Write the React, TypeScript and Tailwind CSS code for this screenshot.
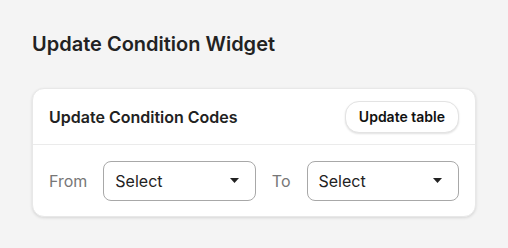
import React from "react";

function Caret() {
  return (
    <svg width="9" height="5" viewBox="0 0 9 5" className="shrink-0">
      <path d="M0 0 L9 0 L4.5 5 Z" fill="#222" />
    </svg>
  );
}

function SelectBox() {
  return (
    <div className="flex-1 h-10 flex items-center justify-between pl-[11px] pr-4 rounded-lg border border-[#a8a8a8] bg-white">
      <span className="text-[16px] text-[#222]">Select</span>
      <Caret />
    </div>
  );
}

export default function App() {
  return (
    <div
      className="w-[508px] h-[248px] bg-[#f4f4f4] px-8 pt-[30px]"
      style={{ fontFamily: "Inter, 'Noto Sans', sans-serif" }}
    >
      <h1 className="text-[20px] leading-[28px] font-semibold text-[#222]">
        Update Condition Widget
      </h1>
      <div className="mt-[30px] bg-white rounded-xl border border-[#e8e8e8] shadow-[0_1px_3px_rgba(0,0,0,0.12)]">
        <div className="h-14 flex items-center justify-between px-4 border-b border-[#ebebeb]">
          <span className="text-[16px] font-semibold text-[#222]">Update Condition Codes</span>
          <button className="h-8 px-[13px] rounded-[14px] border border-[#e3e3e3] bg-white text-[14px] font-semibold text-[#111] shadow-[0_1px_2px_rgba(0,0,0,0.12)]">
            Update table
          </button>
        </div>
        <div className="h-[71px] flex items-center gap-4 px-4">
          <span className="text-[16px] text-[#777]">From</span>
          <SelectBox />
          <span className="text-[16px] text-[#777]">To</span>
          <SelectBox />
        </div>
      </div>
    </div>
  );
}
